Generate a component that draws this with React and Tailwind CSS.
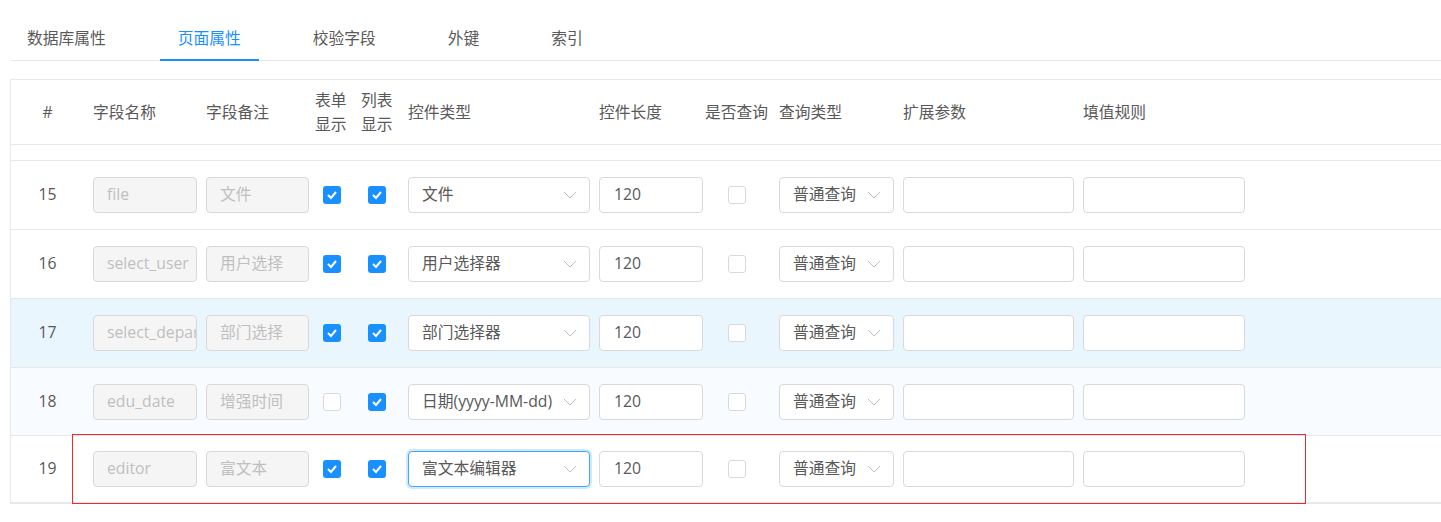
import React from "react";

const FONT = { fontFamily: '"Open Sans", "Noto Sans CJK SC", sans-serif' };

const rows = [
  { n: 15, name: "file", remark: "文件", form: true, list: true, type: "文件", bg: "bg-white", h: "h-[69px]" },
  { n: 16, name: "select_user", remark: "用户选择", form: true, list: true, type: "用户选择器", bg: "bg-white", h: "h-[69px]" },
  { n: 17, name: "select_depart", remark: "部门选择", form: true, list: true, type: "部门选择器", bg: "bg-[#e9f6fd]", h: "h-[69px]" },
  { n: 18, name: "edu_date", remark: "增强时间", form: false, list: true, type: "日期(yyyy-MM-dd)", bg: "bg-[#f8fbff]", h: "h-[68px]" },
  { n: 19, name: "editor", remark: "富文本", form: true, list: true, type: "富文本编辑器", bg: "bg-white", focus: true, mark: true, h: "h-[68px]" },
];

function Chevron() {
  return (
    <svg width="14" height="8" viewBox="0 0 14 8" className="shrink-0">
      <polyline points="1,1 7,7 13,1" fill="none" stroke="#bfbfbf" strokeWidth="1" />
    </svg>
  );
}

function Check({ on }) {
  if (on) {
    return (
      <div className="w-[18px] h-[18px] rounded-[3px] bg-[#1890ff] flex items-center justify-center">
        <svg width="12" height="10" viewBox="0 0 12 10">
          <polyline points="2,5 5,8 10,2" fill="none" stroke="#fff" strokeWidth="2" />
        </svg>
      </div>
    );
  }
  return <div className="w-[18px] h-[18px] rounded-[3px] border border-[#d9d9d9] bg-white" />;
}

function DisabledInput({ value, w }) {
  return (
    <div
      className={`${w} h-[36px] rounded-[4px] border border-[#d9d9d9] bg-[#f5f5f5] px-[13px] flex items-center text-[#bfbfbf] whitespace-nowrap overflow-hidden`}
    >
      {value}
    </div>
  );
}

function Input({ value, w }) {
  return (
    <div
      className={`${w} h-[36px] rounded-[4px] border border-[#d9d9d9] bg-white px-[14px] flex items-center text-[#595959] whitespace-nowrap overflow-hidden`}
    >
      {value}
    </div>
  );
}

function Select({ value, w, focus }) {
  return (
    <div
      className={`${w} h-[36px] rounded-[4px] border bg-white pl-[13px] pr-[12px] flex items-center justify-between text-[#595959] whitespace-nowrap ${
        focus ? "border-[#40a9ff] shadow-[0_0_0_2px_rgba(24,144,255,0.2)]" : "border-[#d9d9d9]"
      }`}
    >
      <span className="overflow-hidden">{value}</span>
      <Chevron />
    </div>
  );
}

export default function App() {
  return (
    <div className="w-[1441px] h-[522px] bg-white overflow-hidden text-[15.75px]" style={FONT}>
      {/* Tabs */}
      <div className="ml-[10px] border-b border-[#e8e8e8] flex text-[#595959]">
        <div className="flex gap-[36px] -ml-[1px]">
          {["数据库属性", "页面属性", "校验字段", "外键", "索引"].map((t, i) => (
            <div
              key={t}
              className={`relative px-[18px] pt-[26px] pb-[10px] leading-[24px] ${i === 1 ? "text-[#1890ff]" : ""}`}
            >
              {t}
              {i === 1 && <div className="absolute left-0 right-0 bottom-[-1px] h-[2px] bg-[#1890ff]" />}
            </div>
          ))}
        </div>
      </div>

      {/* Table */}
      <div className="ml-[10px] mt-[18px] border-l border-t border-[#e8e8e8] text-[#595959]">
        {/* Header */}
        <div className="h-[65px] border-b border-[#e8e8e8] flex items-center leading-[24px]">
          <div className="w-[82px] pr-[9px] text-center shrink-0">#</div>
          <div className="w-[113px] shrink-0">字段名称</div>
          <div className="w-[109px] shrink-0">字段备注</div>
          <div className="w-[46px] shrink-0">表单<br />显示</div>
          <div className="w-[47px] shrink-0">列表<br />显示</div>
          <div className="w-[191px] shrink-0">控件类型</div>
          <div className="w-[106px] shrink-0">控件长度</div>
          <div className="w-[74px] shrink-0">是否查询</div>
          <div className="w-[124px] shrink-0">查询类型</div>
          <div className="w-[180px] shrink-0">扩展参数</div>
          <div className="shrink-0">填值规则</div>
        </div>
        <div className="h-[16px] border-b border-[#e8e8e8]" />

        {rows.map((r) => (
          <div
            key={r.n}
            className={`relative ${r.h} border-b border-[#e8e8e8] flex items-center ${r.bg} ${
              r.mark ? "border-b-2" : ""
            }`}
          >
            <div className="w-[82px] pr-[9px] text-center shrink-0">{r.n}</div>
            <div className="w-[113px] shrink-0">
              <DisabledInput value={r.name} w="w-[104px]" />
            </div>
            <div className="w-[109px] shrink-0">
              <DisabledInput value={r.remark} w="w-[103px]" />
            </div>
            <div className="w-[46px] shrink-0 pl-[8px]">
              <Check on={r.form} />
            </div>
            <div className="w-[47px] shrink-0 pl-[7px]">
              <Check on={r.list} />
            </div>
            <div className="w-[191px] shrink-0">
              <Select value={r.type} w="w-[182px]" focus={r.focus} />
            </div>
            <div className="w-[106px] shrink-0">
              <Input value="120" w="w-[104px]" />
            </div>
            <div className="w-[74px] shrink-0 pl-[23px]">
              <Check on={false} />
            </div>
            <div className="w-[124px] shrink-0">
              <Select value="普通查询" w="w-[115px]" />
            </div>
            <div className="w-[180px] shrink-0">
              <Input value="" w="w-[171px]" />
            </div>
            <div className="shrink-0">
              <Input value="" w="w-[162px]" />
            </div>
            {r.mark && (
              <div className="absolute left-[61px] top-[-2px] w-[1234px] h-[70px] border border-[#ee2b2b] pointer-events-none" />
            )}
          </div>
        ))}
      </div>
    </div>
  );
}
